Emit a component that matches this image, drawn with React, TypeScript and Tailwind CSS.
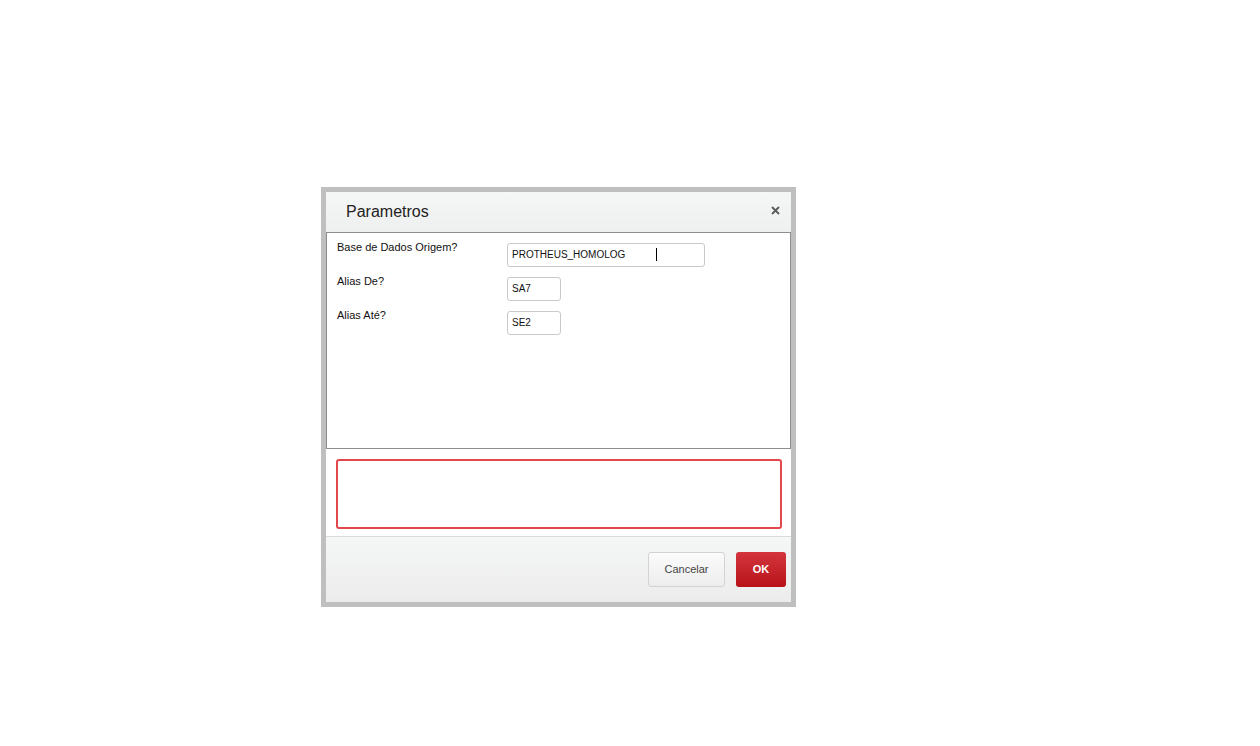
import React from "react";

const font = { fontFamily: '"Liberation Sans", Arial, sans-serif' };

function Field({ label, value, width, cursor }: { label: string; value: string; width: string; cursor?: boolean }) {
  return (
    <div className="flex items-start h-[34px]">
      <div className="w-[170px] text-[11px] leading-[13px] text-[#111] -mt-[2px]">{label}</div>
      <div
        className={`relative h-[24px] ${width} border border-[#c9c9c9] rounded-[3px] bg-white flex items-center pl-[4px] pb-[1px] text-[10px] text-[#111]`}
      >
        {value}
        {cursor && <span className="absolute left-[148px] top-[4px] w-px h-[13px] bg-black" />}
      </div>
    </div>
  );
}

export default function App() {
  return (
    <div className="min-h-[746px] bg-white pt-[187px] pl-[321px]" style={font}>
      <div className="w-[475px] h-[420px] border-[5px] border-[#bfbfbf] bg-white flex flex-col">
        <div className="h-[40px] shrink-0 bg-gradient-to-b from-[#f5f6f6] to-[#eeefef] flex items-center justify-between pl-[20px] pr-[11px]">
          <span className="text-[16px] text-[#222]">Parametros</span>
          <svg width="9" height="9" viewBox="0 0 9 9" className="mt-[-3px]">
            <path d="M1 1L8 8M8 1L1 8" stroke="#5a5a5a" strokeWidth="1.8" />
          </svg>
        </div>
        <div className="h-[217px] shrink-0 border border-[#8e8e92] bg-white pt-[10px] pl-[10px]">
          <Field label="Base de Dados Origem?" value="PROTHEUS_HOMOLOG" width="w-[198px]" cursor />
          <Field label="Alias De?" value="SA7" width="w-[54px]" />
          <Field label="Alias Até?" value="SE2" width="w-[54px]" />
        </div>
        <div className="h-[87px] shrink-0 bg-white pt-[10px] pl-[10px] pr-[9px]">
          <div className="h-[70px] border-2 border-[#e2474d] rounded-[3px]" />
        </div>
        <div className="flex-1 border-t border-[#d9d9d9] bg-gradient-to-b from-[#f5f6f6] to-[#ececed] flex items-center justify-end gap-[11px] pr-[5px]">
          <button className="w-[77px] h-[35px] rounded-[3px] border border-[#d3d3d3] bg-gradient-to-b from-[#fbfbfb] to-[#ededed] text-[11px] text-[#444]">
            Cancelar
          </button>
          <button className="w-[50px] h-[35px] rounded-[3px] bg-gradient-to-b from-[#d3343d] to-[#b90f17] text-[11px] font-bold text-white">
            OK
          </button>
        </div>
      </div>
    </div>
  );
}
